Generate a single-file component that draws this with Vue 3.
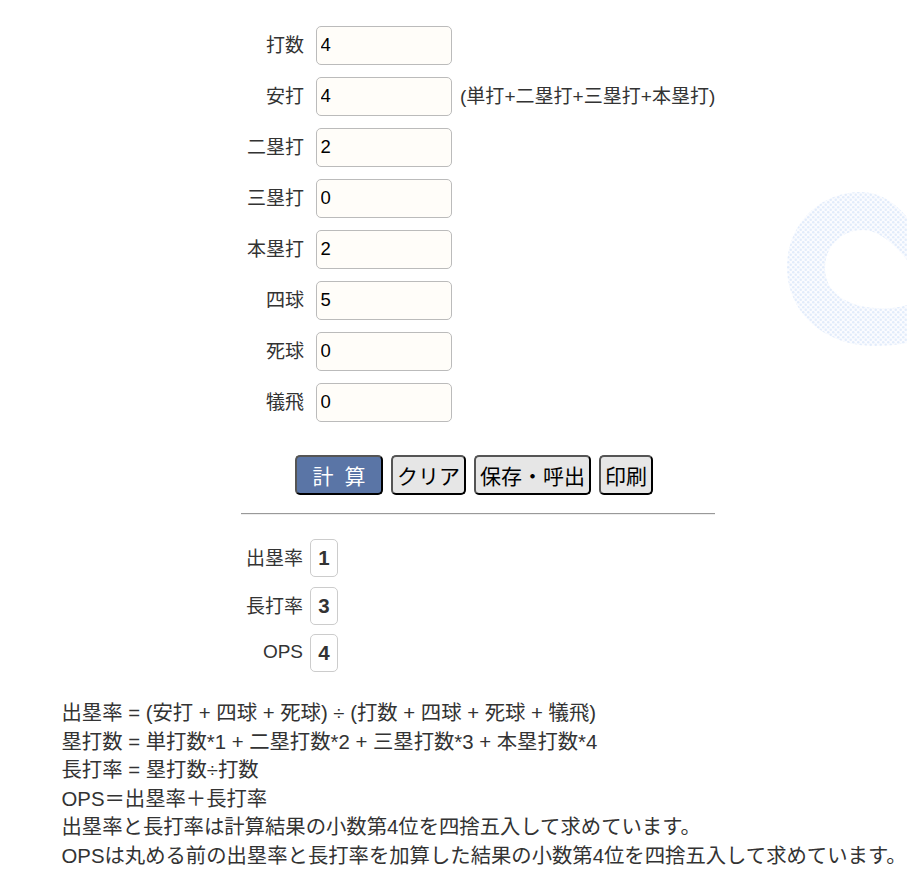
<template>
  <div class="page">
    <svg class="deco" width="120" height="156" viewBox="0 0 120 156">
      <defs>
        <pattern id="dots" width="5" height="5" patternUnits="userSpaceOnUse">
          <rect width="5" height="5" fill="#fbfcff" />
          <circle cx="1.25" cy="1.25" r="1.25" fill="#e2ecfb" />
          <circle cx="3.75" cy="3.75" r="1.25" fill="#e2ecfb" />
        </pattern>
      </defs>
      <path
        fill="url(#dots)"
        fill-rule="evenodd"
        d="M120 26 C106 10 92 1 74 1 C32 1 0 34 0 76 C0 122 38 155 88 155 C100 155 110 154 120 152 L120 114 C110 117 100 118 88 117 C60 115 38 102 38 77 C38 56 54 39 76 39 C92 39 108 54 120 69 Z"
      />
    </svg>

    <form class="form" @submit.prevent>
      <div v-for="field in fields" :key="field.label" class="row">
        <label class="label">{{ field.label }}</label>
        <input class="input" type="text" :value="field.value" />
        <span v-if="field.note" class="note">{{ field.note }}</span>
      </div>
    </form>

    <div class="buttons">
      <button class="btn primary" type="button">計 算</button>
      <button class="btn" type="button">クリア</button>
      <button class="btn" type="button">保存・呼出</button>
      <button class="btn" type="button">印刷</button>
    </div>

    <hr class="rule" />

    <div class="results">
      <div v-for="r in results" :key="r.label" class="result">
        <span class="result-label">{{ r.label }}</span>
        <span class="result-value">{{ r.value }}</span>
      </div>
    </div>

    <div class="notes">
      <p v-for="line in notes" :key="line">{{ line }}</p>
    </div>
  </div>
</template>

<script setup>
const fields = [
  { label: '打数', value: '4' },
  { label: '安打', value: '4', note: '(単打+二塁打+三塁打+本塁打)' },
  { label: '二塁打', value: '2' },
  { label: '三塁打', value: '0' },
  { label: '本塁打', value: '2' },
  { label: '四球', value: '5' },
  { label: '死球', value: '0' },
  { label: '犠飛', value: '0' }
]

const results = [
  { label: '出塁率', value: '1' },
  { label: '長打率', value: '3' },
  { label: 'OPS', value: '4' }
]

const notes = [
  '出塁率 = (安打 + 四球 + 死球) ÷ (打数 + 四球 + 死球 + 犠飛)',
  '塁打数 = 単打数*1 + 二塁打数*2 + 三塁打数*3 + 本塁打数*4',
  '長打率 = 塁打数÷打数',
  'OPS＝出塁率＋長打率',
  '出塁率と長打率は計算結果の小数第4位を四捨五入して求めています。',
  'OPSは丸める前の出塁率と長打率を加算した結果の小数第4位を四捨五入して求めています。'
]
</script>

<style>
html, body {
  margin: 0;
  background: #fff;
}
</style>

<style scoped>
.page {
  position: relative;
  width: 907px;
  height: 874px;
  overflow: hidden;
  box-sizing: border-box;
  padding-top: 26px;
  font-family: "Liberation Sans", "Noto Sans CJK JP", sans-serif;
  color: #333;
}

.deco {
  position: absolute;
  left: 787px;
  top: 191px;
}

.form {
  display: flex;
  flex-direction: column;
  gap: 12px;
  position: relative;
}

.row {
  display: flex;
  align-items: center;
  height: 39px;
}

.label {
  width: 304px;
  padding-bottom: 5px;
  text-align: right;
  font-size: 19px;
  margin-right: 12px;
}

.input {
  box-sizing: border-box;
  width: 136px;
  height: 39px;
  padding: 0 3.5px 2px;
  border: 1px solid #bbb;
  border-radius: 5px;
  background: #fffdf9;
  font: 18.5px "Liberation Sans", sans-serif;
  color: #000;
}

.note {
  margin-left: 8px;
  padding-bottom: 5px;
  font-size: 19.05px;
}

.buttons {
  display: flex;
  justify-content: center;
  gap: 8px;
  width: 948px;
  margin-top: 33px;
  position: relative;
}

.btn {
  box-sizing: border-box;
  height: 40px;
  padding: 0 4px 1px;
  border: 2px solid;
  border-color: #555 #000 #000 #555;
  border-radius: 5px;
  background: #e6e6e6;
  color: #000;
  font: 21px "Liberation Sans", "Noto Sans CJK JP", sans-serif;
}

.primary {
  width: 88px;
  background: #5a75a6;
  color: #fff;
  word-spacing: 5px;
}

.rule {
  box-sizing: border-box;
  width: 474px;
  height: 2px;
  margin: 18px 0 0 241px;
  border: 0;
  border-top: 1px solid #999;
  border-bottom: 1px solid #eee;
}

.results {
  display: flex;
  flex-direction: column;
  gap: 9.5px;
  margin-top: 24px;
  position: relative;
}

.result {
  display: flex;
  align-items: center;
  height: 38px;
}

.result-label {
  width: 303px;
  margin-right: 7px;
  padding-bottom: 3px;
  text-align: right;
  font-size: 19px;
}

.result-value {
  box-sizing: border-box;
  display: flex;
  align-items: center;
  justify-content: center;
  width: 28px;
  height: 38px;
  border: 1px solid #ccc;
  border-radius: 5px;
  font-size: 20.5px;
  font-weight: 700;
}

.notes {
  margin: 27px 0 0 61.5px;
  font-size: 20.35px;
  line-height: 28.5px;
  white-space: nowrap;
  position: relative;
}

.notes p {
  margin: 0;
}
</style>
